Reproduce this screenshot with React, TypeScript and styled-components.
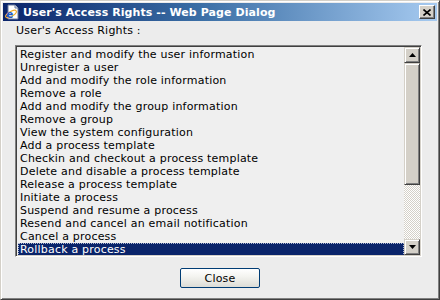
import { FunctionComponent } from "react";
import styled, { createGlobalStyle } from "styled-components";

const GlobalStyle = createGlobalStyle`
  html, body {
    margin: 0;
    padding: 0;
    background: #ffffff;
  }
`;

const rights = [
  "Register and modify the user information",
  "Unregister a user",
  "Add and modify the role information",
  "Remove a role",
  "Add and modify the group information",
  "Remove a group",
  "View the system configuration",
  "Add a process template",
  "Checkin and checkout a process template",
  "Delete and disable a process template",
  "Release a process template",
  "Initiate a process",
  "Suspend and resume a process",
  "Resend and cancel an email notification",
  "Cancel a process",
  "Rollback a process",
];

const Window = styled.div`
  width: 440px;
  height: 300px;
  box-sizing: border-box;
  display: flex;
  flex-direction: column;
  background: #ececec;
  border-top: 1px solid #d4d0c8;
  border-left: 1px solid #d4d0c8;
  border-right: 1px solid #404040;
  border-bottom: 1px solid #404040;
  box-shadow: inset 1px 1px 0 #ffffff, inset -1px -1px 0 #808080;
  padding: 2px;
  font-family: "DejaVu Sans", Verdana, sans-serif;
`;

const TitleBar = styled.div`
  height: 18px;
  flex-shrink: 0;
  display: flex;
  align-items: center;
  padding: 0 2px 0 1px;
  background: linear-gradient(to right, #0a246a 0%, #3a6ea5 45%, #a6caf0 100%);
`;

const TitleIcon = styled.svg`
  width: 16px;
  height: 16px;
  flex-shrink: 0;
`;

const TitleText = styled.div`
  margin-left: 3px;
  flex: 1;
  color: #ffffff;
  font-weight: bold;
  font-size: 11px;
  letter-spacing: 0.08px;
  white-space: nowrap;
`;

const CloseBox = styled.div`
  width: 16px;
  height: 14px;
  box-sizing: border-box;
  background: #d4d0c8;
  border-top: 1px solid #ffffff;
  border-left: 1px solid #ffffff;
  border-right: 1px solid #404040;
  border-bottom: 1px solid #404040;
  box-shadow: inset -1px -1px 0 #808080;
  display: flex;
  align-items: center;
  justify-content: center;
`;

const Body = styled.div`
  flex: 1;
  display: flex;
  flex-direction: column;
  padding: 3px 15px 0 12px;
`;

const Label = styled.div`
  font-size: 11px;
  letter-spacing: 0.2px;
  color: #000000;
  height: 14px;
  line-height: 14px;
  margin-left: 1px;
`;

const ListBox = styled.div`
  margin-top: 7px;
  height: 212px;
  box-sizing: border-box;
  display: flex;
  background: #efefef;
  border-top: 1px solid #808080;
  border-left: 1px solid #808080;
  border-right: 1px solid #ffffff;
  border-bottom: 1px solid #ffffff;
  box-shadow: inset 1px 1px 0 #404040, inset -1px -1px 0 #d4d0c8;
  padding: 1px;
`;

const Items = styled.div`
  flex: 1;
  display: flex;
  flex-direction: column;
  overflow: hidden;
  padding: 1px 0 0 1px;
`;

const Item = styled.div<{ $selected?: boolean }>`
  height: 13px;
  flex-shrink: 0;
  line-height: 12px;
  box-sizing: border-box;
  padding-left: 1px;
  font-size: 11px;
  letter-spacing: 0.2px;
  white-space: nowrap;
  color: ${(p) => (p.$selected ? "#ffffff" : "#000000")};
  background: ${(p) => (p.$selected ? "#0a246a" : "transparent")};
  border: 1px dotted ${(p) => (p.$selected ? "#b0b8d0" : "transparent")};
`;

const ScrollBar = styled.div`
  width: 16px;
  display: flex;
  flex-direction: column;
  background: repeating-conic-gradient(#d4d0c8 0 25%, #ffffff 0 50%) 0 0 / 2px 2px;
`;

const ScrollButton = styled.div`
  width: 16px;
  height: 16px;
  flex-shrink: 0;
  box-sizing: border-box;
  background: #d4d0c8;
  border-top: 1px solid #d4d0c8;
  border-left: 1px solid #d4d0c8;
  border-right: 1px solid #404040;
  border-bottom: 1px solid #404040;
  box-shadow: inset 1px 1px 0 #ffffff, inset -1px -1px 0 #808080;
  display: flex;
  align-items: center;
  justify-content: center;
`;

const Thumb = styled(ScrollButton)<{ $size: number }>`
  height: ${(p) => p.$size}px;
`;

const Track = styled.div`
  flex: 1;
`;

const ButtonRow = styled.div`
  display: flex;
  justify-content: center;
  margin-top: 11px;
  padding-left: 3px;
`;

const DialogButton = styled.button`
  width: 80px;
  height: 20px;
  box-sizing: border-box;
  padding: 0;
  border: 1px solid #003c74;
  border-radius: 2px;
  background: linear-gradient(to bottom, #ffffff 0%, #f4f4f0 40%, #dcdcd6 100%);
  font-family: "DejaVu Sans", Verdana, sans-serif;
  font-size: 11px;
  letter-spacing: 0.2px;
  color: #000000;
`;

const Arrow: FunctionComponent<{ down?: boolean }> = ({ down }) => (
  <svg width="7" height="4" viewBox="0 0 7 4">
    <path d={down ? "M0 0H7L3.5 4Z" : "M3.5 0L7 4H0Z"} fill="#000" />
  </svg>
);

const App: FunctionComponent = () => {
  return (
    <>
      <GlobalStyle />
      <Window>
        <TitleBar>
          <TitleIcon viewBox="0 0 16 16">
            <path d="M4 1H11L14 4V15H4Z" fill="#ffffff" stroke="#6b7b9c" strokeWidth="1" />
            <path d="M11 1V4H14" fill="#dde4f0" stroke="#6b7b9c" strokeWidth="1" />
            <ellipse cx="7" cy="10" rx="6" ry="2.4" fill="none" stroke="#f0b030" strokeWidth="1.2" transform="rotate(-30 7 10)" />
            <text x="2.4" y="14" fontSize="10" fontWeight="bold" fill="#1e5cc8" fontFamily="DejaVu Sans, sans-serif">e</text>
          </TitleIcon>
          <TitleText>User's Access Rights -- Web Page Dialog</TitleText>
          <CloseBox>
            <svg width="8" height="7" viewBox="0 0 8 7">
              <path d="M0.5 0.5L7.5 6.5M7.5 0.5L0.5 6.5" stroke="#000" strokeWidth="1.6" />
            </svg>
          </CloseBox>
        </TitleBar>
        <Body>
          <Label>User's Access Rights :</Label>
          <ListBox>
            <Items>
              {rights.map((r, i) => (
                <Item key={r} $selected={i === rights.length - 1}>
                  {r}
                </Item>
              ))}
            </Items>
            <ScrollBar>
              <ScrollButton>
                <Arrow />
              </ScrollButton>
              <Thumb $size={122} />
              <Track />
              <ScrollButton>
                <Arrow down />
              </ScrollButton>
            </ScrollBar>
          </ListBox>
          <ButtonRow>
            <DialogButton>Close</DialogButton>
          </ButtonRow>
        </Body>
      </Window>
    </>
  );
};

export default App;
